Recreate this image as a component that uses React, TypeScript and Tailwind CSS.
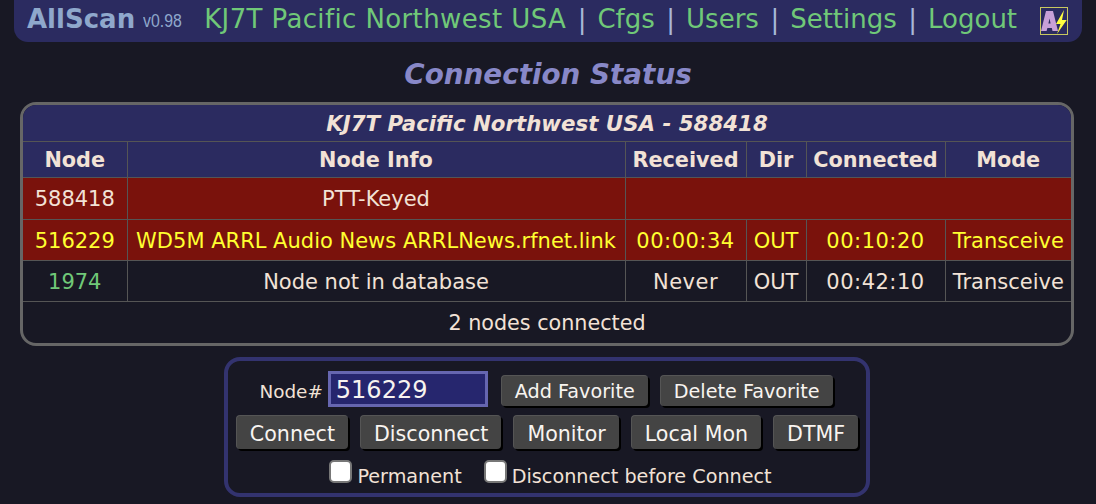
const font = "font-['DejaVu_Sans',sans-serif]";

const navItems = ['Cfgs', 'Users', 'Settings', 'Logout'];

type Row = {
  node: string;
  info: string;
  received?: string;
  dir?: string;
  connected?: string;
  mode?: string;
  rowClass: string;
  nodeClass: string;
  h: string;
};

const rows: Row[] = [
  {
    node: '588418',
    info: 'PTT-Keyed',
    rowClass: 'bg-[#7a120c] text-[#f2e2d6]',
    nodeClass: '',
    h: 'h-[42px]',
  },
  {
    node: '516229',
    info: 'WD5M ARRL Audio News ARRLNews.rfnet.link',
    received: '00:00:34',
    dir: 'OUT',
    connected: '00:10:20',
    mode: 'Transceive',
    rowClass: 'bg-[#7a120c] text-[#ffff30]',
    nodeClass: '',
    h: 'h-[41px]',
  },
  {
    node: '1974',
    info: 'Node not in database',
    received: 'Never',
    dir: 'OUT',
    connected: '00:42:10',
    mode: 'Transceive',
    rowClass: 'text-[#f2e2d6]',
    nodeClass: 'text-[#70c878]',
    h: 'h-[41px]',
  },
];

function SmallBtn({ label }: { label: string }) {
  return (
    <button className="h-[31px] px-[13px] pt-[3px] bg-[#444444] text-[#f8f4f0] text-[19.2px] leading-none rounded-[4px] border-t border-l border-[#555555] shadow-[2px_2px_0_#000000]">
      {label}
    </button>
  );
}

function BigBtn({ label }: { label: string }) {
  return (
    <button className="h-[34px] px-[13px] pt-[3px] bg-[#444444] text-[#f8f4f0] text-[20.6px] leading-none rounded-[4px] border-t border-l border-[#555555] shadow-[2px_2px_0_#000000]">
      {label}
    </button>
  );
}

function Check({ label, className }: { label: string; className?: string }) {
  return (
    <label className={`flex items-start ${className ?? ''}`}>
      <span className="w-[23px] h-[23px] bg-white rounded-[5px] border-2 border-[#777777] mr-[5px]" />
      <span className="mt-[3px]">{label}</span>
    </label>
  );
}

function Logo() {
  return (
    <svg width="28" height="28" viewBox="0 0 28 28" className="shrink-0">
      <rect x="0.5" y="0.5" width="27" height="27" fill="#2b2b60" stroke="#c8c860" />
      <path
        d="M1 24 L6 4 H13 L18 24 H12.5 L11.8 21 H7.4 L6.6 24 Z M8.4 16.5 H10.6 L9.5 11.5 Z"
        fill="#c8a0d8"
        fillRule="evenodd"
      />
      <path d="M24 3 L16 17 H20.5 L17 27 L26.7 13 H22 Z" fill="#ffff40" />
    </svg>
  );
}

export default function App() {
  return (
    <div className={`w-[1096px] h-[504px] overflow-hidden bg-[#181824] ${font}`}>
      <div className="mx-[14px] h-[42px] bg-[#2b2b60] rounded-b-[14px] flex items-center pl-[13px] pr-[12px]">
        <div className="flex items-center mb-[4px]">
          <span className="text-[26px] font-bold text-[#8fa8cc] leading-none">AllScan</span>
          <span className="ml-[8px] mt-[4px] inline-block origin-left scale-x-[0.88] text-[18px] text-[#8fa8cc] leading-none font-['Liberation_Sans',sans-serif]">
            v0.98
          </span>
          <span className="ml-[17px] text-[26px] tracking-[0.38px] text-[#70c878] leading-none">
            KJ7T Pacific Northwest USA
          </span>
          {navItems.map((item) => (
            <span key={item} className="flex items-center text-[26px] leading-none">
              <span className="ml-[11.5px] mr-[11px] text-[#a8b8d8]">|</span>
              <span className="text-[#70c878]">{item}</span>
            </span>
          ))}
        </div>
        <div className="ml-auto mr-[2px]">
          <Logo />
        </div>
      </div>

      <h2 className="mt-[15px] text-center text-[27.8px] leading-[36px] font-bold italic text-[#8888c8]">
        Connection Status
      </h2>

      <div className="ml-[20px] mt-[9px] w-[1054px] h-[244px] border-[3px] border-[#666666] rounded-[16px] overflow-hidden">
        <table className="w-full table-fixed border-collapse text-[21px] text-[#f2e2d6]">
          <colgroup>
            <col className="w-[104px]" />
            <col className="w-[498px]" />
            <col className="w-[121px]" />
            <col className="w-[60px]" />
            <col className="w-[139px]" />
            <col />
          </colgroup>
          <thead>
            <tr className="h-[36px] bg-[#2b2b60]">
              <th colSpan={6} className="text-[21.33px] font-bold italic border-b border-[#555555] pt-[3px]">
                KJ7T Pacific Northwest USA - 588418
              </th>
            </tr>
            <tr className="h-[36px] bg-[#2b2b60]">
              {['Node', 'Node Info', 'Received', 'Dir', 'Connected', 'Mode'].map((h, i) => (
                <th
                  key={h}
                  className={`text-[20.8px] font-bold border-b border-[#555555] pt-[3px] ${i < 5 ? 'border-r' : ''}`}
                >
                  {h}
                </th>
              ))}
            </tr>
          </thead>
          <tbody>
            {rows.map((r) => (
              <tr key={r.node} className={`${r.rowClass} ${r.h}`}>
                <td className={`text-center pt-[4px] border-b border-r border-[#555555] ${r.nodeClass}`}>{r.node}</td>
                <td className="text-center pt-[4px] border-b border-r border-[#555555] whitespace-nowrap">{r.info}</td>
                {r.received ? (
                  <>
                    <td className="text-center pt-[4px] border-b border-r border-[#555555] tracking-[0.5px]">{r.received}</td>
                    <td className="text-center pt-[4px] border-b border-r border-[#555555]">{r.dir}</td>
                    <td className="text-center pt-[4px] border-b border-r border-[#555555] tracking-[0.5px]">{r.connected}</td>
                    <td className="text-center pt-[4px] border-b border-[#555555] whitespace-nowrap">{r.mode}</td>
                  </>
                ) : (
                  <td colSpan={4} className="border-b border-[#555555]" />
                )}
              </tr>
            ))}
            <tr className="h-[41px]">
              <td colSpan={6} className="text-center pt-[3px] text-[20.7px]">
                2 nodes connected
              </td>
            </tr>
          </tbody>
        </table>
      </div>

      <div className="ml-[224px] mt-[11px] w-[646px] h-[140px] border-[4px] border-[#33336f] rounded-[16px] flex flex-col items-center pt-[10px]">
        <div className="flex items-center h-[36px] mr-[2px]">
          <span className="text-[18.4px] text-[#f2e2d6] mr-[5px] mt-[5px]">Node#</span>
          <div className="w-[160px] h-[36px] bg-[#26266e] border-[3px] border-[#6666b0] text-[24px] leading-[33px] text-[#f8f4f0] pl-[5px] mr-[13px]">
            516229
          </div>
          <div className="flex gap-[12px] mt-[2px]">
            <SmallBtn label="Add Favorite" />
            <SmallBtn label="Delete Favorite" />
          </div>
        </div>
        <div className="flex gap-[12px] mt-[8px]">
          {['Connect', 'Disconnect', 'Monitor', 'Local Mon', 'DTMF'].map((b) => (
            <BigBtn key={b} label={b} />
          ))}
        </div>
        <div className="flex items-start ml-[7px] mt-[11px] text-[19.2px] text-[#f2e2d6]">
          <Check label="Permanent" className="mr-[22px]" />
          <Check label="Disconnect before Connect" />
        </div>
      </div>
    </div>
  );
}
